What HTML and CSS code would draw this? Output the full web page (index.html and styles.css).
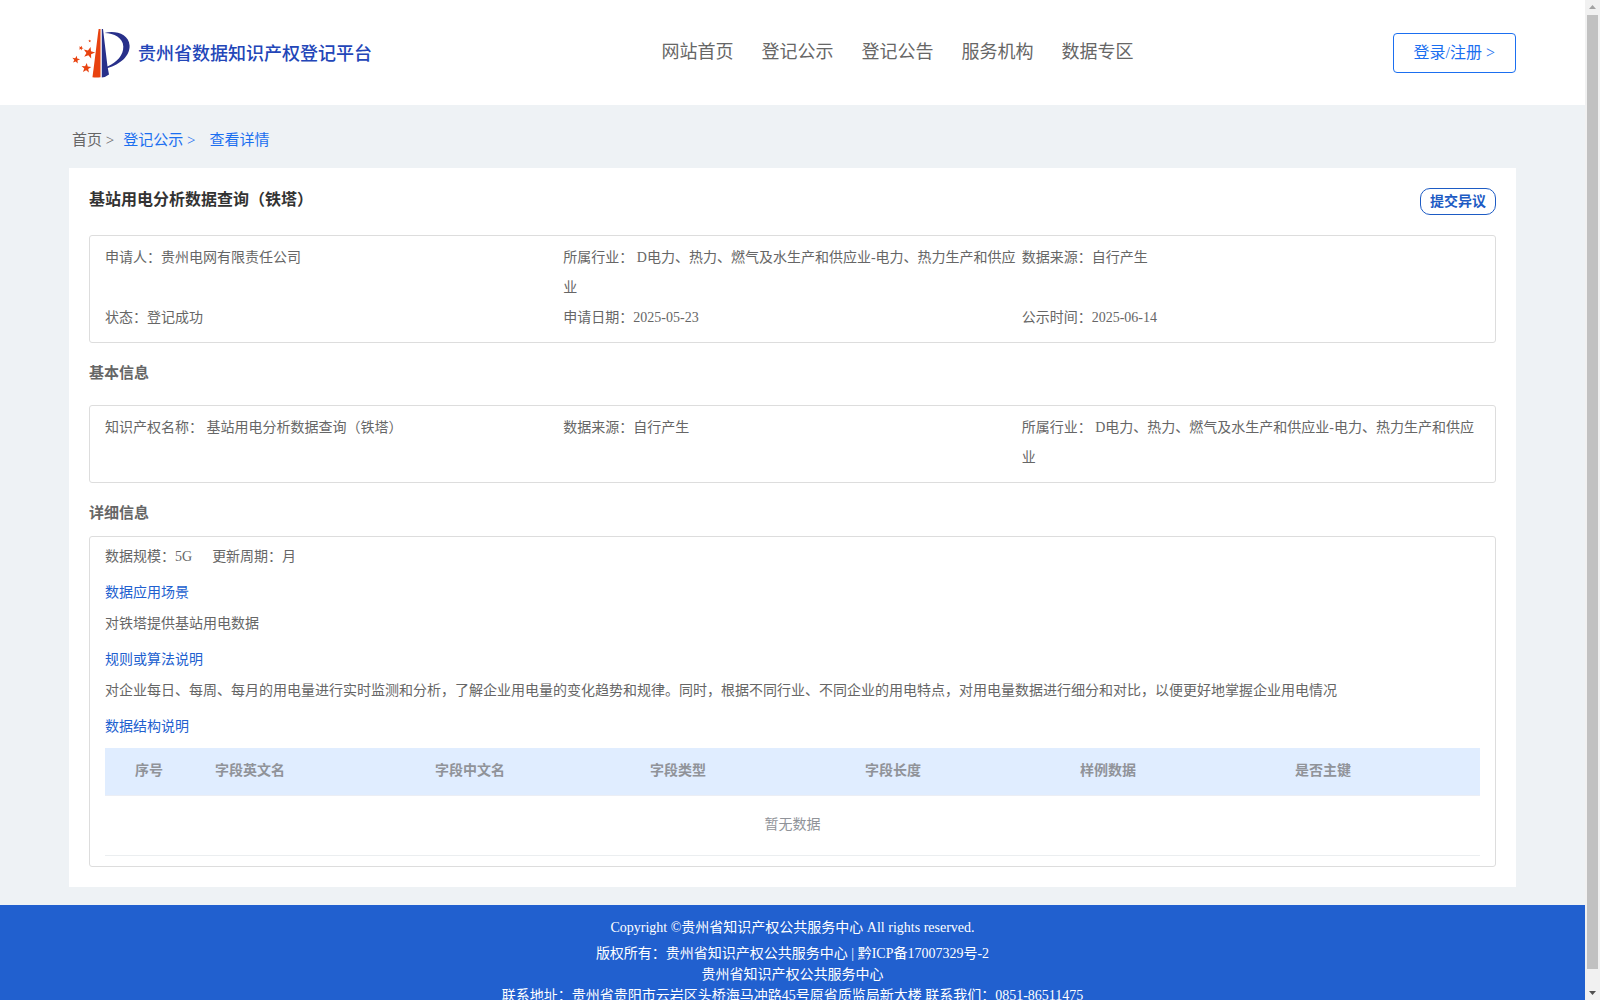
FILE: index.html
```html
<!DOCTYPE html>
<html lang="zh-CN">
<head>
<meta charset="utf-8">
<title>贵州省数据知识产权登记平台</title>
<link rel="stylesheet" href="styles.css">
</head>
<body>
<div class="shell">
  <div class="page">
    <header class="header">
      <a class="brand" href="#">
        <svg class="logo" viewBox="0 0 58 50" aria-hidden="true">
          <defs><path id="star" d="M0-5 1.3-1.6 4.9-1.5 2 .8 3 4.2 0 2.2-3 4.2-2 .8-4.9-1.5-1.3-1.6Z"/></defs>
          <path fill="#e8420f" d="M26.600 1H28.500V49.200Q24 49.800 20.500 49.200Z"/>
          <path fill="#28308a" d="M29.800 1H31L35.500 38.500C45 34 51.500 27.500 51.300 18.500 51 9.500 42 5.500 32.500 5 43 2 57 6 57.600 17.500 58 28 48 36.500 35.800 40L37 46.500Q34 49 29.800 49.500Z"/>
          <g fill="#e8420f">
            <use href="#star" transform="translate(17 24.700) rotate(15) scale(1.200)"/>
            <use href="#star" transform="translate(4 31.700) rotate(10) scale(.8)"/>
            <use href="#star" transform="translate(14.300 40) rotate(5) scale(1)"/>
            <use href="#star" transform="translate(9 20) rotate(20) scale(.5)"/>
            <use href="#star" transform="translate(17.700 13) scale(.3)"/>
          </g>
        </svg>
        <span>贵州省数据知识产权登记平台</span>
      </a>
      <nav class="nav">
        <a href="#">网站首页</a>
        <a href="#">登记公示</a>
        <a href="#">登记公告</a>
        <a href="#">服务机构</a>
        <a href="#">数据专区</a>
      </nav>
      <div class="account"><button class="login" type="button">登录/注册 &gt;</button></div>
    </header>

    <main class="main">
      <nav class="crumbs">
        <a href="#">首页 &gt;</a>
        <a class="on" href="#">登记公示 &gt;</a>
        <a class="on last" href="#">查看详情</a>
      </nav>

      <article class="card">
        <div class="card-head">
          <h1>基站用电分析数据查询（铁塔）</h1>
          <button class="objection" type="button">提交异议</button>
        </div>

        <div class="box facts">
          <div>申请人：贵州电网有限责任公司</div>
          <div>所属行业： D电力、热力、燃气及水生产和供应业-电力、热力生产和供应业</div>
          <div>数据来源：自行产生</div>
          <div>状态：登记成功</div>
          <div>申请日期：2025-05-23</div>
          <div>公示时间：2025-06-14</div>
        </div>

        <h2 class="basic-title">基本信息</h2>
        <div class="box facts">
          <div>知识产权名称： 基站用电分析数据查询（铁塔）</div>
          <div>数据来源：自行产生</div>
          <div>所属行业： D电力、热力、燃气及水生产和供应业-电力、热力生产和供应业</div>
        </div>

        <h2 class="detail-title">详细信息</h2>
        <div class="box detail">
          <p class="meta"><span>数据规模：5G</span><span>更新周期：月</span></p>
          <h3>数据应用场景</h3>
          <p>对铁塔提供基站用电数据</p>
          <h3>规则或算法说明</h3>
          <p>对企业每日、每周、每月的用电量进行实时监测和分析，了解企业用电量的变化趋势和规律。同时，根据不同行业、不同企业的用电特点，对用电量数据进行细分和对比，以便更好地掌握企业用电情况</p>
          <h3>数据结构说明</h3>
          <table class="fields">
            <colgroup><col class="c-index"><col class="c-name"><col class="c-field"><col class="c-field"><col class="c-field"><col class="c-field"><col></colgroup>
            <thead>
              <tr><th class="index">序号</th><th>字段英文名</th><th>字段中文名</th><th>字段类型</th><th>字段长度</th><th>样例数据</th><th>是否主键</th></tr>
            </thead>
            <tbody>
              <tr><td colspan="7">暂无数据</td></tr>
            </tbody>
          </table>
        </div>
      </article>
    </main>

    <footer class="footer">
      <p class="copyright">Copyright ©贵州省知识产权公共服务中心 All rights reserved.</p>
      <p class="owner">版权所有：贵州省知识产权公共服务中心 | 黔ICP备17007329号-2</p>
      <p>贵州省知识产权公共服务中心</p>
      <p>联系地址：贵州省贵阳市云岩区头桥海马冲路45号原省质监局新大楼 联系我们：0851-86511475</p>
    </footer>
  </div>

  <div class="scrollbar" aria-hidden="true">
    <svg viewBox="0 0 15 15"><path fill="#a3a3a3" d="M4 9 7.500 5 11 9Z"/></svg>
    <div class="thumb"></div>
    <svg viewBox="0 0 15 15"><path fill="#505050" d="M4 6 7.500 10 11 6Z"/></svg>
  </div>
</div>
</body>
</html>
```

FILE: styles.css
```css
* { box-sizing: border-box; }

body {
  margin: 0;
  font-family: "Liberation Serif", "Noto Sans CJK SC", serif;
  font-size: 14px;
  line-height: 20px;
  color: #666;
  background: #eef2f5;
}

h1, h2, h3, p { margin: 0; }
a { color: inherit; text-decoration: none; }
button { font-family: inherit; background: #fff; cursor: pointer; }

.shell {
  display: grid;
  grid-template-columns: minmax(0, 1fr) 15px;
  height: 100vh;
}

.page {
  overflow-y: auto;
  scrollbar-width: none;
}

/* Header */
.header {
  display: grid;
  grid-template-columns: 1fr auto 1fr;
  align-items: center;
  height: 105px;
  padding: 0 69px;
  background: #fff;
}

.brand {
  display: flex;
  align-items: center;
  gap: 8px;
  padding-left: 3px;
  font-size: 18px;
  line-height: 24px;
  font-weight: 500;
  color: #2346b8;
}

.brand span { padding-top: 3px; }
.logo { width: 58px; height: 50px; }

.nav {
  display: flex;
  gap: 28px;
  padding: 0 0 2px 210px;
  font-size: 18px;
  line-height: 24px;
}

.account { text-align: right; }

.login {
  height: 40px;
  padding: 0 20px 3px;
  border: 1px solid #1b6ff0;
  border-radius: 4px;
  font-size: 16px;
  color: #1b6ff0;
}

/* Breadcrumb and card */
.main { padding: 0 69px 18px; }

.crumbs {
  display: flex;
  align-items: center;
  gap: 9px;
  height: 63px;
  padding: 6px 3px 0;
  font-size: 15px;
}

.crumbs .on { color: #1b6ff0; }
.crumbs .last { padding-left: 5px; }

.card {
  padding: 20px;
  background: #fff;
}

.card-head {
  display: flex;
  justify-content: space-between;
  align-items: flex-start;
  height: 47px;
}

.card-head h1 {
  font-size: 16px;
  line-height: 24px;
  color: #333;
}

.objection {
  height: 27px;
  padding: 0 9px 4px;
  border: 1px solid #1d5bc4;
  border-radius: 10px;
  font-size: 14px;
  font-weight: bold;
  color: #1d5bc4;
}

.box {
  border: 1px solid #ddd;
  border-radius: 3px;
}

.facts {
  display: grid;
  grid-template-columns: repeat(3, 1fr);
  padding: 7px 15px 9px;
  line-height: 30px;
}

.card h2 {
  font-size: 15px;
  line-height: 20px;
}

.basic-title { padding: 20px 0 22px; }
.detail-title { padding: 20px 0 13px; }

.detail { padding: 4px 15px 10px; }

.detail p, .detail h3 {
  font-size: 14px;
  line-height: 31px;
}

.detail h3 {
  padding-top: 5px;
  font-weight: normal;
  color: #2160cf;
}

.meta { display: flex; gap: 20px; }

.fields {
  width: 100%;
  margin-top: 6px;
  table-layout: fixed;
  border-collapse: separate;
  border-spacing: 0;
  color: #909399;
}

.c-index { width: 100px; }
.c-name { width: 220px; }
.c-field { width: 215px; }

.fields th {
  height: 48px;
  padding: 0 10px 1px;
  border-bottom: 1px solid #ebeef5;
  text-align: left;
  background: #e0edff;
}

.fields .index { padding-left: 30px; }

.fields td {
  height: 60px;
  padding: 0 0 1px;
  border-bottom: 1px solid #ebeef0;
  text-align: center;
}

/* Footer */
.footer {
  padding: 12px 20px 24px;
  text-align: center;
  line-height: 21px;
  color: #fff;
  background: #2160cf;
}

.footer .copyright { padding-bottom: 5px; }

/* Scroll track */
.scrollbar {
  display: flex;
  flex-direction: column;
  background: #f1f1f1;
}

.scrollbar svg { width: 15px; height: 15px; }

.thumb {
  flex: 1;
  margin: 0 2px 16px;
  background: #c1c1c1;
}
```
